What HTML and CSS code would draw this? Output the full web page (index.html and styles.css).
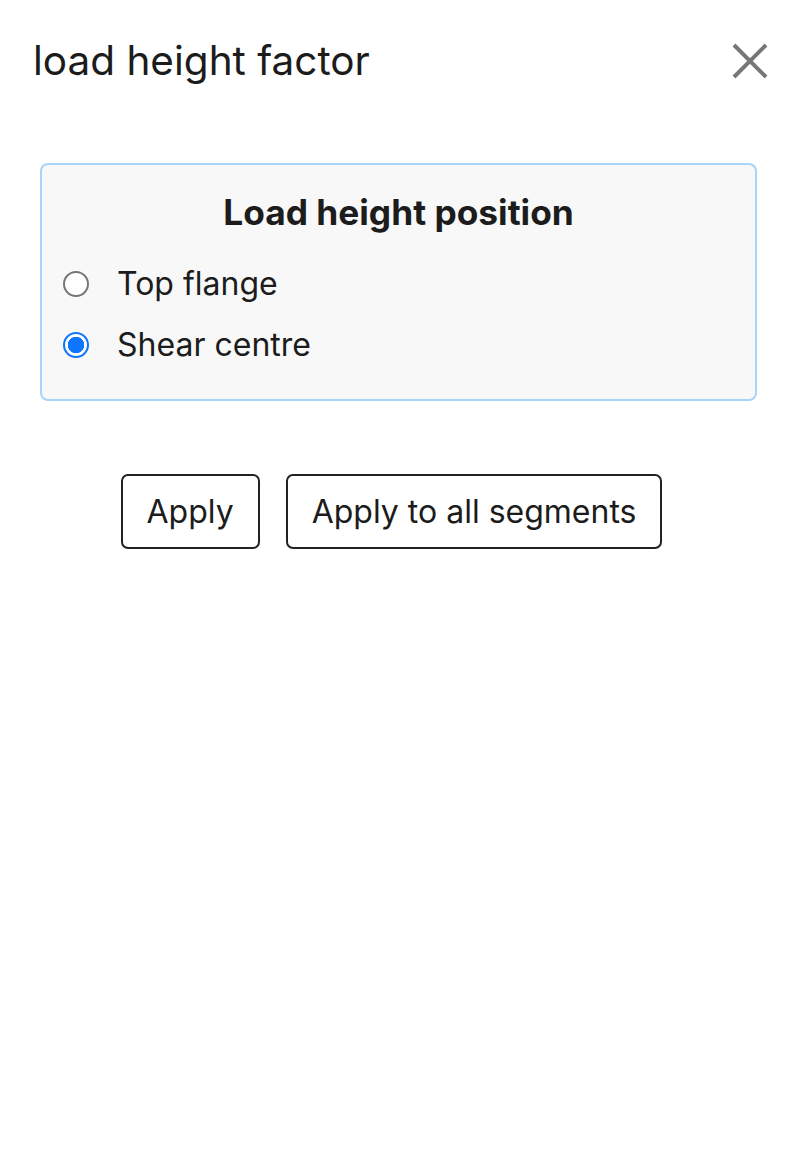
FILE: index.html
```html
<!DOCTYPE html>
<html>
<head>
<meta charset="utf-8">
<link rel="stylesheet" href="styles.css">
</head>
<body>
<div class="dialog">
  <div class="header">
    <h1 class="title">load height factor</h1>
    <button class="close" aria-label="Close">
      <svg width="36" height="36" viewBox="0 0 36 36"><path d="M2 2 L34 34 M34 2 L2 34" stroke="#777" stroke-width="4" fill="none"/></svg>
    </button>
  </div>
  <div class="body">
    <fieldset class="group">
      <div class="legend">Load height position</div>
      <label class="option"><span class="radio"></span><span>Top flange</span></label>
      <label class="option"><span class="radio checked"></span><span>Shear centre</span></label>
    </fieldset>
    <div class="actions">
      <button class="btn">Apply</button>
      <button class="btn">Apply to all segments</button>
    </div>
  </div>
</div>
</body>
</html>
```
FILE: styles.css
```css
html, body { margin: 0; padding: 0; background: #fff; }
body { font-family: Inter, "Noto Sans", sans-serif; color: #1c1c1c; }
.dialog { padding: 38px 24px 0 33px; }
.header { display: flex; justify-content: space-between; align-items: center; height: 46px; }
.title { margin: 0; font-size: 40.5px; font-weight: 400; letter-spacing: 0; line-height: 46px; }
.close { border: none; background: none; padding: 0; width: 36px; height: 36px; margin-top: 0; }
.close svg { display: block; }
.body { padding: 79px 11px 0 7px; }
.group { margin: 0; border: 2px solid #a8d4fa; border-radius: 8px; background: #f8f8f8; padding: 28px 20px 26px 20px; height: 238px; box-sizing: border-box; }
.legend { text-align: center; font-size: 35.3px; font-weight: 700; line-height: 40px; margin-bottom: 20px; }
.option { display: flex; align-items: center; gap: 28px; font-size: 32px; line-height: 40px; height: 61px; }
.radio { width: 22px; height: 22px; border: 2px solid #777; border-radius: 50%; background: #fff; box-sizing: content-box; margin-left: 1px; flex: none; }
.radio.checked { border-color: #0d75ff; background: radial-gradient(circle, #0d75ff 0 8px, #fff 8.5px); }
.actions { display: flex; justify-content: center; gap: 26px; margin-top: 73px; padding-right: 14px; }
.btn { font-family: Inter, "Noto Sans", sans-serif; font-size: 32px; color: #1c1c1c; background: #fff; border: 2px solid #222; border-radius: 7px; height: 75px; padding: 0 24px; }
```
